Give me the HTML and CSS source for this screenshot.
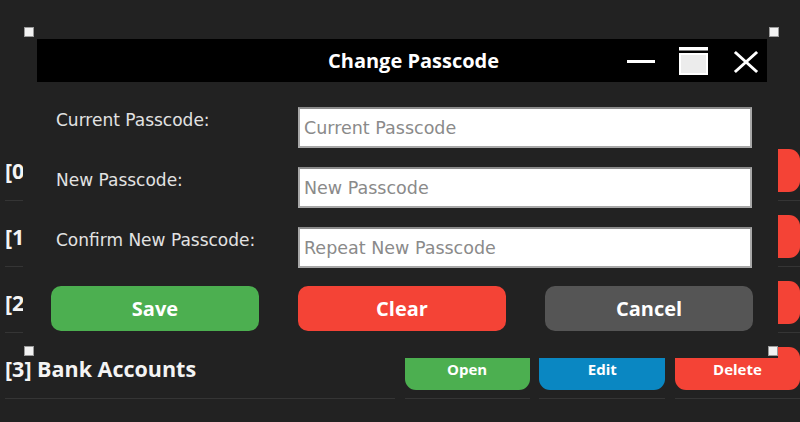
FILE: index.html
```html
<!DOCTYPE html>
<html lang="en">
<head>
<meta charset="utf-8">
<title>Change Passcode</title>
<link rel="stylesheet" href="styles.css">
</head>
<body>
<div class="list">
  <div class="cell name">[0]</div>
  <div class="cell"><button class="rbtn open">Open</button></div>
  <div class="cell"><button class="rbtn edit">Edit</button></div>
  <div class="cell"><button class="rbtn delete">Delete</button></div>

  <div class="cell name">[1]</div>
  <div class="cell"><button class="rbtn open">Open</button></div>
  <div class="cell"><button class="rbtn edit">Edit</button></div>
  <div class="cell"><button class="rbtn delete">Delete</button></div>

  <div class="cell name">[2]</div>
  <div class="cell"><button class="rbtn open">Open</button></div>
  <div class="cell"><button class="rbtn edit">Edit</button></div>
  <div class="cell"><button class="rbtn delete">Delete</button></div>

  <div class="cell name">[3] Bank Accounts</div>
  <div class="cell"><button class="rbtn open">Open</button></div>
  <div class="cell"><button class="rbtn edit">Edit</button></div>
  <div class="cell"><button class="rbtn delete">Delete</button></div>
</div>

<div class="dialog">
  <span class="handle tl"></span>
  <span class="handle tr"></span>
  <span class="handle bl"></span>
  <span class="handle br"></span>

  <div class="titlebar">
    <span class="title">Change Passcode</span>
    <svg class="controls" width="140" height="43" viewBox="0 0 140 43">
      <rect x="5" y="21" width="28" height="3" fill="#fff"/>
      <rect x="57" y="8" width="29" height="3.5" fill="#fff"/>
      <rect x="58" y="15" width="27" height="20" fill="#ececec" stroke="#fff" stroke-width="2"/>
      <path d="M114 14 L134 32 M134 14 L114 32" stroke="#fff" stroke-width="3" stroke-linecap="square"/>
    </svg>
  </div>

  <div class="form">
    <div class="field">
      <label class="label">Current Passcode:</label>
      <input class="input" type="password" placeholder="Current Passcode">
    </div>
    <div class="field">
      <label class="label">New Passcode:</label>
      <input class="input" type="password" placeholder="New Passcode">
    </div>
    <div class="field">
      <label class="label">Confirm New Passcode:</label>
      <input class="input" type="password" placeholder="Repeat New Passcode">
    </div>
  </div>

  <div class="actions">
    <button class="btn save">Save</button>
    <button class="btn clear">Clear</button>
    <button class="btn cancel">Cancel</button>
  </div>
</div>
</body>
</html>
```

FILE: styles.css
```css
html, body {
  margin: 0;
  padding: 0;
}

body {
  width: 800px;
  height: 422px;
  overflow: hidden;
  position: relative;
  background: #222222;
  font-family: "Open Sans", "DejaVu Sans", sans-serif;
  color: #fff;
}

/* background list */
.list {
  display: grid;
  grid-template-columns: 390px 125px 126px 125px;
  column-gap: 9.67px;
  row-gap: 14px;
  padding: 149px 0 0 5px;
}

.cell {
  padding-bottom: 8px;
  border-bottom: 1px solid #353535;
}

.name {
  display: flex;
  align-items: center;
  height: 43px;
  font-weight: 700;
  font-size: 21.5px;
  color: #f4f4f4;
  white-space: nowrap;
}

.rbtn {
  display: block;
  width: 100%;
  height: 43px;
  border: none;
  border-radius: 11px;
  color: #fff;
  font-family: "Open Sans", sans-serif;
  font-weight: 700;
  font-size: 15px;
}

.rbtn.open { background: #4caf50; }
.rbtn.edit { background: #0a87c2; }
.rbtn.delete { background: #f44336; }

/* dialog */
.dialog {
  position: absolute;
  left: 23px;
  top: 25px;
  width: 755px;
  height: 333px;
  background: #222222;
}

.handle {
  position: absolute;
  width: 8px;
  height: 8px;
  background: #f2f2f2;
  border: 1px solid #9a9a9a;
}
.handle.tl { left: 1px; top: 2px; }
.handle.tr { right: -1px; top: 2px; }
.handle.bl { left: 1px; bottom: 2px; }
.handle.br { right: 0; bottom: 2px; }

.titlebar {
  margin: 14px 11px 0 14px;
  height: 43px;
  background: #000;
  display: flex;
  align-items: center;
}

.title {
  padding-left: 291px;
  font-weight: 700;
  font-size: 20px;
  color: #fff;
}

.controls {
  margin-left: auto;
  margin-right: 5px;
  display: block;
}

.form {
  margin-top: 25px;
  padding: 0 25px 0 28px;
  display: flex;
  flex-direction: column;
  gap: 19px;
}

.field {
  display: grid;
  grid-template-columns: 247px 454px;
}

.label {
  padding: 3px 0 0 5px;
  font-family: "DejaVu Sans", sans-serif;
  font-size: 17px;
  color: #e2e2e2;
  white-space: nowrap;
}

.input {
  box-sizing: border-box;
  height: 41px;
  width: 454px;
  margin: 0;
  border: 2px solid #a8a8a8;
  border-top-color: #8c8c8c;
  background: #fff;
  padding: 0 4px;
  font-family: "DejaVu Sans", sans-serif;
  font-size: 17.5px;
  color: #333;
}

.input::placeholder {
  color: #8a8a8a;
}

.actions {
  margin-top: 18px;
  padding: 0 25px 0 28px;
  display: flex;
  justify-content: space-between;
}

.btn {
  width: 208px;
  height: 45px;
  border: none;
  border-radius: 10px;
  color: #fff;
  font-family: "Open Sans", sans-serif;
  font-weight: 700;
  font-size: 20px;
}

.btn.save { background: #4caf50; }
.btn.clear { background: #f44336; }
.btn.cancel { background: #555555; }
```
